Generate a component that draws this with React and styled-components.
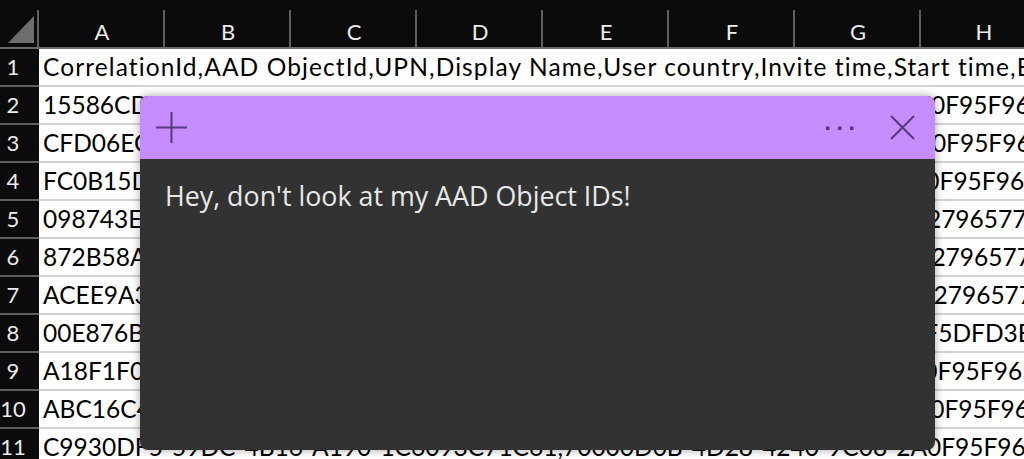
import React from "react";
import styled, { createGlobalStyle } from "styled-components";

const Global = createGlobalStyle`
  html, body { margin: 0; padding: 0; background: #0b0b0b; overflow: hidden; }
  #root { width: 1024px; height: 459px; }
`;

const Sheet = styled.div`
  position: relative;
  width: 1024px;
  height: 459px;
  overflow: hidden;
  background: #0b0b0b;
  font-family: Lato, "Liberation Sans", sans-serif;
`;

const HeaderRow = styled.div`
  display: flex;
  height: 47px;
  border-bottom: 2px solid #6b6b6b;
`;

const Corner = styled.div`
  position: relative;
  flex: 0 0 39px;
  box-sizing: border-box;
  svg { display: block; }
  &::after {
    content: "";
    position: absolute;
    right: 0;
    top: 10px;
    bottom: 0;
    width: 2px;
    background: #5f5f5f;
  }
`;

const ColHeader = styled.div`
  position: relative;
  flex: 0 0 126px;
  box-sizing: border-box;
  padding-top: 21px;
  text-align: center;
  color: #ececec;
  font-size: 22px;
  line-height: 22px;
  &::after {
    content: "";
    position: absolute;
    right: 0;
    top: 10px;
    bottom: 0;
    width: 2px;
    background: #5f5f5f;
  }
`;

const Row = styled.div`
  display: flex;
  height: 38px;
`;

const RowNum = styled.div`
  flex: 0 0 39px;
  box-sizing: border-box;
  display: flex;
  align-items: center;
  justify-content: center;
  padding-right: 13px;
  color: #ececec;
  font-size: 22px;
  line-height: 22px;
  border-bottom: 2px solid #5e5e5e;
`;

const Cell = styled.div`
  flex: 1;
  min-width: 0;
  box-sizing: border-box;
  display: flex;
  align-items: center;
  padding-left: 4px;
  background: #ffffff;
  border-bottom: 2px solid #d2d2d2;
  color: #000;
  font-size: 24.5px;
  line-height: 24.5px;
  letter-spacing: ${(p) => (p.$wide ? "1.1px" : "0")};
  white-space: nowrap;
  overflow: hidden;
`;

const Popup = styled.div`
  position: absolute;
  left: 140px;
  top: 96px;
  width: 795px;
  height: 354px;
  border-radius: 8px;
  overflow: hidden;
  display: flex;
  flex-direction: column;
  background: #323232;
  box-shadow: 0 0 10px rgba(0, 0, 0, 0.35);
`;

const PopupHeader = styled.div`
  flex: 0 0 63px;
  display: flex;
  align-items: center;
  padding: 0 20px 0 16px;
  background: #c48cff;
`;

const IconButton = styled.div`
  display: flex;
  align-items: center;
  justify-content: center;
  svg { display: block; }
`;

const Spacer = styled.div`
  flex: 1;
`;

const Actions = styled.div`
  display: flex;
  align-items: center;
  gap: 36px;
`;

const PopupBody = styled.div`
  flex: 1;
  padding: 21px 24px 21px 25px;
  color: #e8e8e8;
  font-family: "Open Sans", "Noto Sans", sans-serif;
  font-size: 26.8px;
  line-height: 32px;
`;

const ICON = "#553a78";

const PlusIcon = () => (
  <svg width="31" height="31" viewBox="0 0 31 31">
    <path d="M15.5 0 V31 M0 15.5 H31" stroke={ICON} strokeWidth="2" fill="none" />
  </svg>
);

const DotsIcon = () => (
  <svg width="28" height="6" viewBox="0 0 28 6">
    <rect x="0" y="1.5" width="3.5" height="3.5" fill={ICON} />
    <rect x="12" y="1.5" width="3.5" height="3.5" fill={ICON} />
    <rect x="24" y="1.5" width="3.5" height="3.5" fill={ICON} />
  </svg>
);

const CloseIcon = () => (
  <svg width="25" height="25" viewBox="0 0 25 25">
    <path d="M1 1 L24 24 M24 1 L1 24" stroke={ICON} strokeWidth="2" fill="none" />
  </svg>
);

const cols = ["A", "B", "C", "D", "E", "F", "G", "H"];

const rows = [
  "CorrelationId,AAD ObjectId,UPN,Display Name,User country,Invite time,Start time,End time,Duration",
  "15586CD4-2E1A-4B7C-9F3D-8A6E2C1B5D47,70000D0B-4D28-4240-9C08-2A0F95F96E3C,adele@contoso.com",
  "CFD06EC9-41B2-4A8D-B3E5-7C2D9F0A1B64,70000D0B-4D28-4240-9C08-2A0F95F96E3C,alex@contoso.com",
  "FC0B15D2-8E3F-4C61-A7B9-5D4E3F2A1C08,70000D0B-4D28-4240-9C08-2A0F95F96E3C,diego@contoso.com",
  "098743E6-3B2C-4D5E-8F9A-1B2C3D4E5F60,1A2B3C4D-5E6F-4A7B-8C9D-5E2796577C81,grady@contoso.com",
  "872B58A1-6C4D-4E2F-9A1B-3C5D7E9F0A12,1A2B3C4D-5E6F-4A7B-8C9D-5E2796577C81,henrietta@contoso.com",
  "ACEE9A30-7D1E-4F3A-8B2C-4D6E8F0A2B34,1A2B3C4D-5E6F-4A7B-8C9D-5E2796577C81,isaiah@contoso.com",
  "00E876B5-9A3C-4B1D-8E2F-6A7B8C9D0E1F,4C3B2A19-8D7E-4F60-9A1B-C1F5DFD3E0A7,johanna@contoso.com",
  "A18F1F07-2B3C-4D4E-9F5A-6B7C8D9E0F11,70000D0B-4D28-4240-9C08-2A0F95F96E3C,lee@contoso.com",
  "ABC16C42-3D4E-4F5A-8B6C-7D8E9F0A1B22,70000D0B-4D28-4240-9C08-2A0F95F96E3C,lidia@contoso.com",
  "C9930DF5-59DC-4B16-A190-1C6093C71C61,70000D0B-4D28-4240-9C08-2A0F95F96E3C,megan@contoso.com",
];

export default function App() {
  return (
    <>
      <Global />
      <Sheet>
        <HeaderRow>
          <Corner>
            <svg width="37" height="47" viewBox="0 0 37 47">
              <polygon points="34,16 34,43 8,43" fill="#6e6e6e" />
            </svg>
          </Corner>
          {cols.map((c) => (
            <ColHeader key={c}>{c}</ColHeader>
          ))}
        </HeaderRow>
        {rows.map((text, i) => (
          <Row key={i}>
            <RowNum>{i + 1}</RowNum>
            <Cell $wide={i === 0}>{text}</Cell>
          </Row>
        ))}
        <Popup>
          <PopupHeader>
            <IconButton>
              <PlusIcon />
            </IconButton>
            <Spacer />
            <Actions>
              <IconButton>
                <DotsIcon />
              </IconButton>
              <IconButton>
                <CloseIcon />
              </IconButton>
            </Actions>
          </PopupHeader>
          <PopupBody>Hey, don't look at my AAD Object IDs!</PopupBody>
        </Popup>
      </Sheet>
    </>
  );
}
